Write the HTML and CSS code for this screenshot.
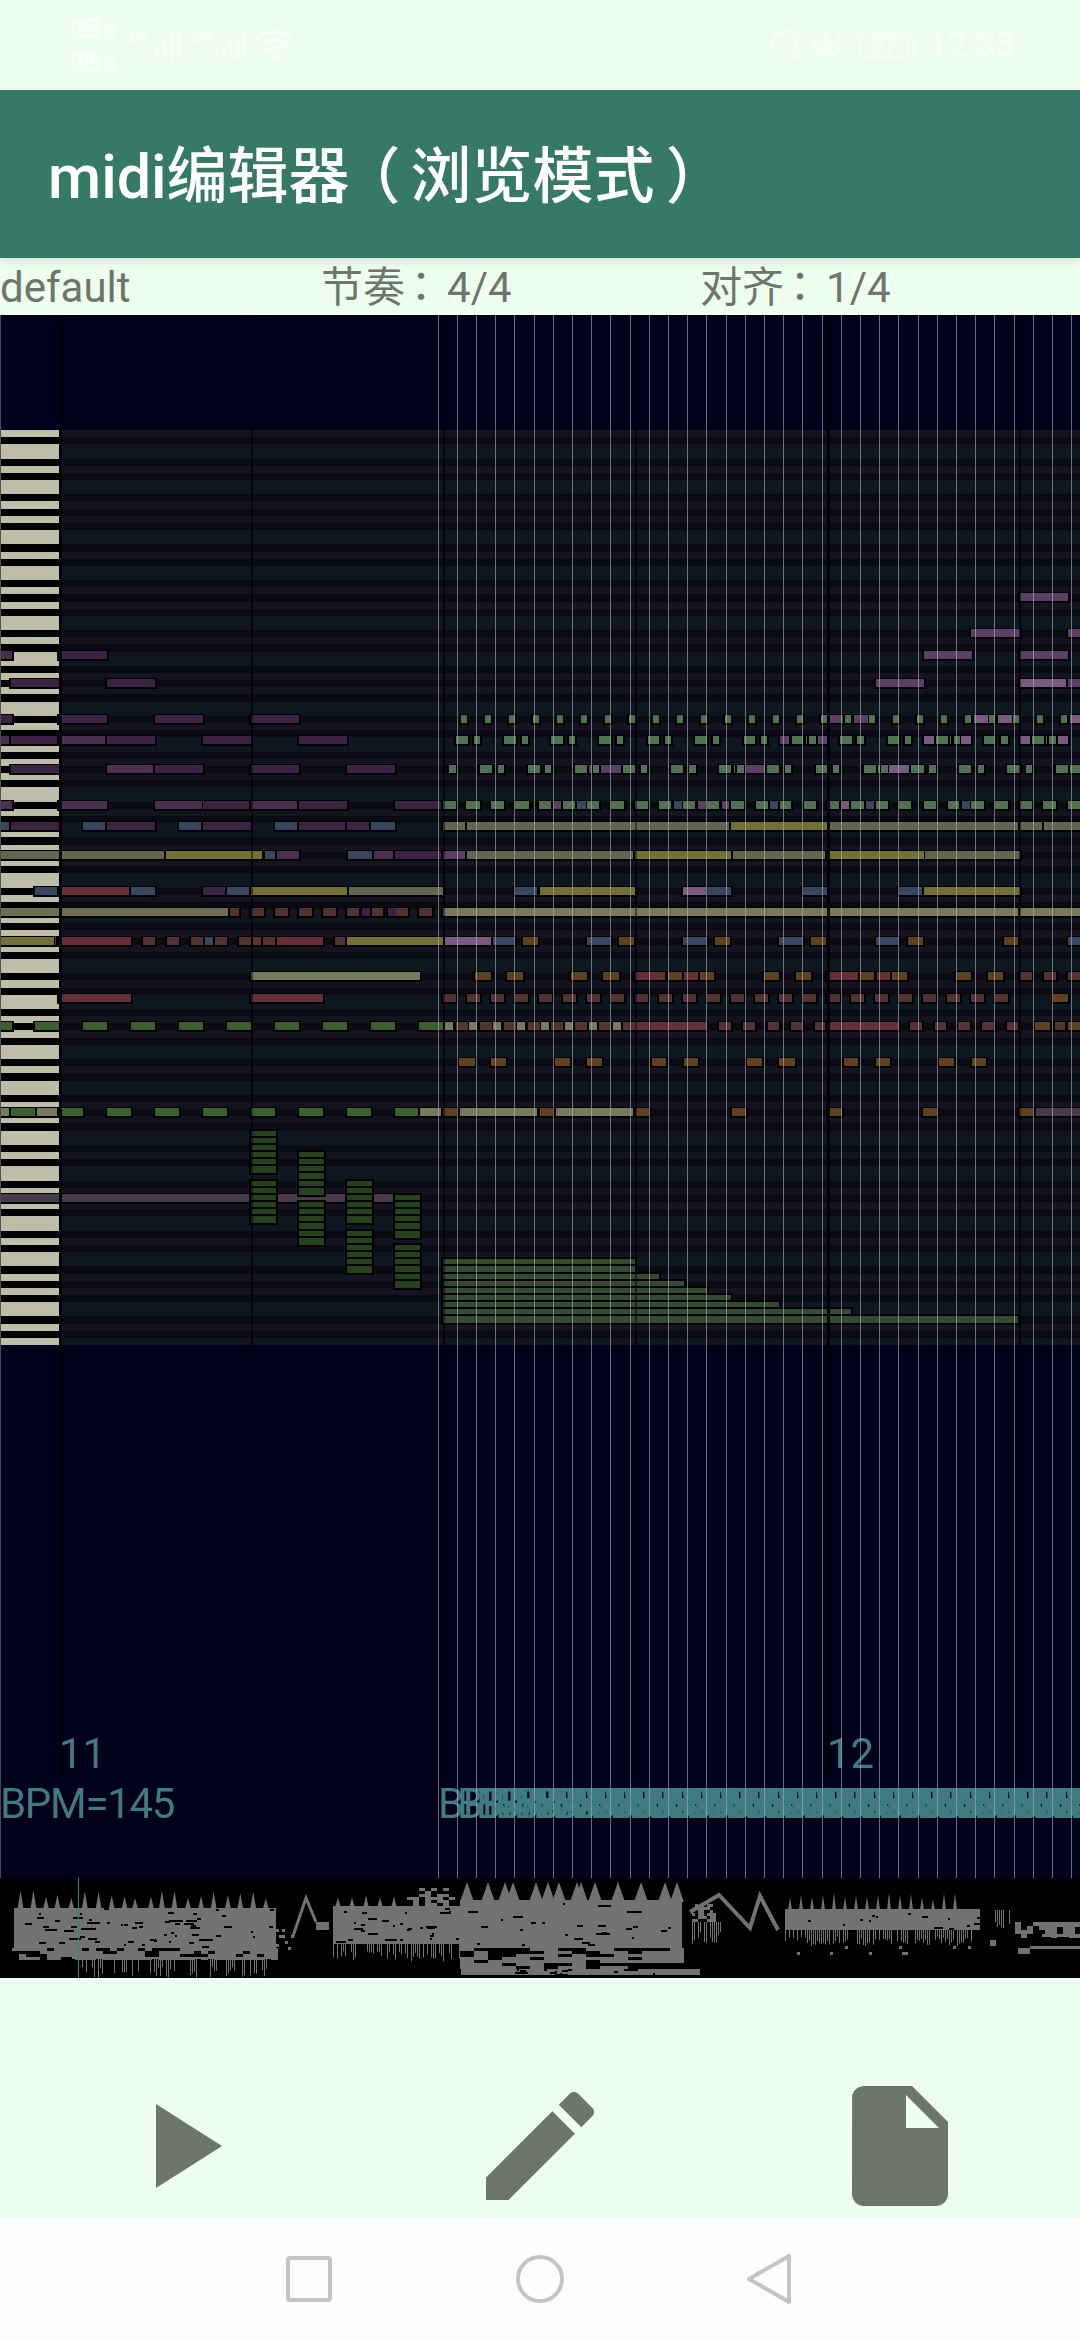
FILE: index.html
```html
<!DOCTYPE html>
<html>
<head>
  <meta charset="utf-8" />
  <title>midi编辑器</title>
  <link rel="stylesheet" href="styles.css">
</head>
<body>
  <div class="status">
    <div class="status-side">
      <div class="sims">
        <div class="sim"><span class="hd">HD</span><span class="slot">1</span></div>
        <div class="sim"><span class="hd">HD</span><span class="slot">2</span></div>
      </div>
      <span class="net">4G</span>
      <svg class="bars" width="34" height="30" viewBox="0 0 34 30"><path d="M0 24h4v6H0zM8 17h4v13H8zM16 11h4v19h-4zM23 5h4v25h-4zM30 0h4v30h-4z"/></svg>
      <span class="net net2">4G</span>
      <svg class="bars" width="32" height="30" viewBox="0 0 34 30"><path d="M0 24h4v6H0zM8 17h4v13H8zM16 11h4v19h-4zM23 5h4v25h-4zM30 0h4v30h-4z"/></svg>
      <svg class="wifi" width="36" height="30" viewBox="0 0 36 30"><path d="M1 8C10 0 26 0 35 8M7 14c6-5 16-5 22 0M12 20c4-3 8-3 12 0" fill="none" stroke-width="3.5"/><path class="solid" d="M15 24h6v6h-6zM25 27l4-3v6zM31 24l4 3-4 3z"/></svg>
    </div>
    <div class="status-side">
      <svg class="head" width="28" height="30" viewBox="0 0 28 30"><path d="M2 20V13a12 12 0 0 1 24 0v11q0 4-6 4h-3" fill="none" stroke-width="3"/><path class="solid" d="M6 15h3v8H6zM19 15h3v8h-3z"/></svg>
      <svg class="eye" width="33" height="28" viewBox="0 0 33 28"><path d="M2 17q14.500-14 29 0q-14.500 14-29 0z" fill="none" stroke-width="3"/><circle class="solid" cx="16.500" cy="17" r="5.500"/><path d="M3 5l4 6M16.500 1v5M30 5l-4 6" fill="none" stroke-width="3"/></svg>
      <div class="battery"><span>87</span></div>
      <span class="cap"></span>
      <span class="clock">12:38</span>
    </div>
  </div>

  <header class="toolbar">midi编辑器<span class="paren paren-open">（</span>浏览模式<span class="paren paren-close">）</span></header>

  <div class="info">
    <span class="info-name">default</span>
    <span class="info-beat">节奏<span class="colon">：</span>4/4</span>
    <span>对齐<span class="colon">：</span>1/4</span>
  </div>

  <div class="roll" id="roll">
    <canvas id="notes" width="1080" height="1563"></canvas>
    <span class="bar-no bar-11">11</span>
    <span class="bar-no bar-12">12</span>
    <span class="bpm bpm-first">BPM=145</span>
    <canvas id="gridlines" width="1080" height="1563"></canvas>
  </div>

  <canvas class="mini" id="mini" width="1080" height="100"></canvas>

  <div class="actions">
    <svg width="144" height="144" viewBox="0 0 24 24"><path d="M8 5v14l11-7z"/></svg>
    <svg width="144" height="144" viewBox="0 0 24 24"><path d="M3 17.250V21h3.750L17.810 9.940l-3.750-3.750L3 17.250zM20.710 7.040c.39-.39.39-1.020 0-1.410l-2.340-2.340c-.39-.39-1.020-.39-1.410 0l-1.830 1.830 3.750 3.750 1.830-1.830z"/></svg>
    <svg width="144" height="144" viewBox="0 0 24 24"><path d="M6 2c-1.100 0-1.990.9-1.990 2L4 20c0 1.100.89 2 1.990 2H18c1.100 0 2-.9 2-2V8l-6-6H6zm7 7V3.500L18.500 9H13z"/></svg>
  </div>

  <nav class="navbar">
    <svg width="50" height="50" viewBox="0 0 50 50"><rect x="4" y="4" width="42" height="42" rx="2"/></svg>
    <svg class="nav-home" width="50" height="50" viewBox="0 0 50 50"><circle cx="25" cy="25" r="22"/></svg>
    <svg class="nav-back" width="50" height="54" viewBox="0 0 50 54"><path d="M46 4v46L6 27z" stroke-linejoin="round"/></svg>
  </nav>

  <script src="roll.js"></script>
</body>
</html>
```

FILE: styles.css
```css
html, body {
  margin: 0;
  padding: 0;
  width: 1080px;
  height: 2340px;
  overflow: hidden;
  background: #eeffef;
  font-family: Roboto, "Noto Sans CJK SC", sans-serif;
}
canvas {
  display: block;
}

/* status bar, nearly white on the mint background */
.status {
  height: 90px;
  box-sizing: border-box;
  padding: 0 65px 0 72px;
  display: flex;
  justify-content: space-between;
  align-items: center;
  color: #f8fff9;
}
.status svg {
  stroke: #f8fff9;
  fill: #f8fff9;
}
.status svg path[fill="none"] {
  fill: none;
}
.status-side {
  display: flex;
  align-items: center;
}
.sims {
  display: flex;
  flex-direction: column;
  gap: 15px;
  margin-right: 11px;
}
.sim {
  display: flex;
  align-items: flex-end;
  gap: 5px;
}
.hd {
  width: 28px;
  height: 19px;
  border-radius: 3px;
  background: #f8fff9;
  color: #eeffef;
  font-size: 17px;
  font-weight: 700;
  line-height: 19px;
  text-align: center;
}
.slot {
  width: 10px;
  height: 13px;
  border-radius: 2px;
  background: #f8fff9;
  color: #eeffef;
  font-size: 11px;
  font-weight: 700;
  line-height: 13px;
  text-align: center;
}
.net {
  font-size: 17px;
  font-weight: 700;
  margin: 0 0 14px 0;
}
.net2 {
  margin-left: 11px;
}
.wifi {
  margin-left: 10px;
}
.bars, .wifi, .head, .eye {
  stroke-width: 0;
}
.wifi path, .head path, .eye path {
  stroke-linecap: round;
}
.solid {
  stroke: none;
}
.bars path {
  stroke: none;
}
.eye {
  margin: 0 16px 0 11px;
}
.battery {
  width: 50px;
  height: 25px;
  box-sizing: border-box;
  border: 2px solid #f8fff9;
  border-radius: 4px;
  font-size: 26px;
  line-height: 21px;
  text-align: center;
}
.cap {
  width: 4px;
  height: 15px;
  margin: 0 12px 0 3px;
  background: #f8fff9;
}
.clock {
  font-size: 35px;
  line-height: 40px;
}

.toolbar {
  height: 168px;
  box-sizing: border-box;
  padding-left: 48px;
  background: #357966;
  color: #fff;
  font-size: 61px;
  font-weight: 500;
  line-height: 174px;
  box-shadow: 0 3px 8px rgba(0, 0, 0, 0.12);
  position: relative;
}
/* the brackets sit in the middle of their cell here */
.paren {
  display: inline-block;
  width: 61px;
  overflow: visible;
}
.paren-open {
  text-indent: -10px;
}
.paren-close {
  text-indent: 11px;
}

.info {
  height: 57px;
  display: grid;
  grid-template-columns: 321px 379px 1fr;
  color: #6e766c;
  font-size: 42px;
  line-height: 60px;
  white-space: nowrap;
}
.colon {
  font-family: "Noto Sans CJK TC", sans-serif;
  line-height: 0;
  margin: 0 5px 0 -5px;
}

.roll {
  position: relative;
  height: 1563px;
  overflow: hidden;
  background: #00001a;
}
#gridlines {
  position: absolute;
  left: 0;
  top: 0;
}
.bar-no, .bpm {
  position: absolute;
  color: #3f7b80;
  font-size: 42px;
  line-height: 42px;
  white-space: nowrap;
}
.bar-no {
  top: 1418px;
}
.bar-11 {
  left: 59px;
}
.bar-12 {
  left: 827px;
}
.bpm {
  top: 1468px;
  letter-spacing: -1.3px;
}
.bpm-first {
  left: 0;
}

.mini {
  height: 100px;
  background: #000;
}

.actions {
  height: 240px;
  box-sizing: border-box;
  padding-top: 96px;
  display: grid;
  grid-template-columns: repeat(3, 1fr);
  justify-items: center;
  align-items: start;
}
.actions svg {
  display: block;
  fill: #6e766c;
}

.navbar {
  height: 122px;
  box-sizing: border-box;
  padding: 36px 0 0 284px;
  display: flex;
  align-items: flex-start;
  background: #fdfdfd;
}
.navbar svg {
  fill: none;
  stroke: #c4c4c4;
  stroke-width: 4;
}
.nav-home {
  margin-left: 181px;
}
.nav-back {
  margin: -2px 0 0 178px;
}
```

FILE: roll.js
```js
'use strict';
// piano roll, drawn like the app draws it: one canvas for keys and notes,
// a second on top of the tempo labels for the thin grid lines

var ROW = 915 / 128;
var TOP = 430 - 315;

var COLORS = {
  p: '#3c2344', P: '#4a2f50', l: '#5c3f66', L: '#7a5a80',
  b: '#38465f', r: '#652f37', o: '#62654f', y: '#737036',
  O: '#767a58', g: '#4f7350', d: '#3b5f31', D: '#25421e',
  h: '#334a31', B: '#5e4220', R: '#533331', v: '#483a4a', q: '#6b6e50'
};

// one line per pitch row: "<color><from>-<to>" in screen pixels
var ROWS = {
  23: 'l1020-1068',
  28: 'l971-1020 l1068-1080',
  31: 'P1-12 p59-107 l924-972 l1020-1068',
  35: 'p11-59 p107-155 l876-924 L1020-1066 l1068-1080',
  40: 'p1-12 p59-107 p155-203 p251-299',
  43: 'P1-9 p11-57 P59-105 p107-155 p203-251 p299-347 g456-468 g474-480 g504-516 g522-528 g551-563 g569-575 g599-611 g617-623 g648-659 g665-671 g695-707 g713-719 g744-755 g761-767 l780-789 g792-803 g806-807 g809-816 l818-827 g840-852 g857-864 g888-899 g905-911 L924-934 g936-948 g950-951 g954-960 L961-971 g984-995 g1001-1008 L1020-1030 g1032-1044 g1046-1047 g1049-1056 L1058-1068',
  47: 'p11-59 P107-153 p155-203 p251-299 p347-395 g449-456 g480-492 g498-504 g528-540 g545-551 g575-587 l589-592 g593-599 l601-621 g623-635 g641-647 g671-683 g689-696 g719-731 g734-735 g737-744 l746-765 g767-779 g785-791 g816-827 g833-839 g864-876 g878-880 g881-888 L889-909 g911-924 g929-936 g959-971 g978-984 g1007-1020 g1026-1032 g1056-1068 g1070-1080',
  52: 'P1-12 P59-107 P155-202 p203-249 P251-297 p299-347 p395-441 g443-456 g466-480 g491-504 g515-529 g539-551 l553-561 g563-575 b577-586 g587-599 g611-624 g635-648 g659-671 b674-682 g683-695 l698-706 g707-719 l722-729 g731-744 g756-768 b770-778 g780-791 g804-816 g827-839 L842-849 g851-864 b866-874 g876-888 g899-911 g924-936 g948-959 b962-970 g971-984 g995-1008 g1020-1032 g1043-1056 g1068-1080',
  55: 'b1-9 p11-59 b83-105 p107-155 b179-201 p203-251 b275-297 p299-345 p347-369 b371-395 o443-465 o467-729 y731-827 o829-1018 o1020-1042 o1044-1080',
  59: 'o1-164 y166-262 b265-275 P277-299 b348-372 P374-393 p395-441 l443-465 o467-633 y635-731 o733-825 y827-924 o925-1020',
  64: 'b35-57 r59-129 b131-155 p203-225 b227-249 y251-347 o349-443 b515-537 y540-635 L683-706 b707-731 b803-827 b899-922 y924-1020',
  67: 'q1-228 R230-239 R251-264 R275-288 R299-312 R323-336 R347-359 p362-370 R372-383 p388-396 R396-408 R419-432 O443-1018 O1020-1080',
  71: 'y1-54 r55-56 r59-131 R143-155 R167-179 R191-203 b205-213 R215-227 R239-251 r253-261 R263-275 r277-323 R335-345 y347-443 L445-491 b493-515 B523-538 b587-611 B619-634 b683-707 B715-730 b779-803 B811-826 b876-899 B908-923 B1004-1018 b1068-1080',
  76: 'O251-420 B475-491 B507-523 B571-587 B603-619 r635-665 B668-682 r684-698 B700-714 B764-779 B796-811 r827-858 B860-874 r877-890 B892-907 B956-971 B988-1003 R1020-1032 R1044-1056 R1068-1080',
  79: 'r59-131 r251-323 B1053-1068',
  83: 'd1-12 r635-707 r827-899 R719-731 R743-755 R768-779 R791-803 R815-825 R910-922 R935-946 R958-970 R982-994 R1007-1018 B1035-1050 R1055-1065 B1068-1080',
  88: 'B459-475 B491-506 B555-570 B587-602 B652-666 B684-698 B747-762 B779-795 B844-858 B876-890 B939-954 B972-986',
  95: 'O1-9 d11-35 O37-57 d59-83 d107-131 d155-179 d203-227 d251-275 d299-323 d347-371 d395-418 O420-441 B443-457 O460-537 B540-553 O556-633 B636-649 B732-746 B828-842 B923-937 B1019-1033 v1036-1080',
  107: 'v1-251 v277-347 v373-420'
};

// notes that repeat on a fixed step
function every(row, color, start, width, step, count) {
  for (var i = 0; i < count; i++) {
    var x = start + i * step;
    ROWS[row] += ' ' + color + x + '-' + (x + width);
  }
}
ROWS[40] += ' l829-843 l854-868 L974-988 L998-1012 L1070-1080';
every(40, 'g', 461, 6, 24, 15);
every(40, 'g', 821, 6, 24, 11);
every(79, 'R', 443, 12.5, 24, 24);
every(83, 'd', 35, 24, 48, 9);
for (var i = 0; i < 4; i++) {
  ROWS[83] += ' O' + (445 + 24 * i) + '-' + (453 + 24 * i);
  ROWS[83] += ' R' + (456 + 24 * i) + '-' + (468 + 24 * i);
}
ROWS[83] += ' d419-443';
for (i = 0; i < 4; i++) {
  ROWS[83] += ' O' + (541 + 24 * i) + '-' + (549 + 24 * i);
  ROWS[83] += ' R' + (551 + 24 * i) + '-' + (563 + 24 * i);
}

// stacked drum hits and the long decaying chord, drawn last, row by row
var STACKS = [
  [251, 276, [98, 99, 100, 101, 102, 103, 105, 106, 107, 108, 109, 110]],
  [299, 324, [101, 102, 103, 104, 105, 106, 108, 109, 110, 111, 112, 113]],
  [347, 372, [105, 106, 107, 108, 109, 110, 112, 113, 114, 115, 116, 117]],
  [395, 420, [107, 108, 109, 110, 111, 112, 114, 115, 116, 117, 118, 119]]
];
var DECAY = [[116, 635], [117, 635], [118, 659], [119, 684], [120, 707], [121, 731], [122, 779], [123, 851], [124, 1018]];

function rowY(r) {
  return TOP + r * ROW;
}

function drawKeys(c) {
  var black = [1, 4, 6, 9, 11];
  for (var r = 0; r < 128; r++) {
    var y = Math.round(rowY(r));
    var h = Math.round(rowY(r + 1)) - y;
    var n = r % 12;
    var isBlack = black.indexOf(n) >= 0;
    c.fillStyle = isBlack ? '#0a0a13' : (n == 2 || n == 3 || n == 7 || n == 8 ? '#0e1620' : '#13141f');
    c.fillRect(0, y, 1080, h);
    c.fillStyle = isBlack ? '#000' : '#bdbda8';
    c.fillRect(1, y, 58, h);
  }
}

// stacked notes leave 5px of colour and 2px of black per row
function drawNote(c, r, x0, x1, color) {
  var y = Math.round(rowY(r));
  c.fillStyle = '#000';
  c.fillRect(Math.round(x0) - 2, y - 2, Math.round(x1) - Math.round(x0) + 4, 11);
  c.fillStyle = color;
  c.fillRect(Math.round(x0), y, Math.round(x1) - Math.round(x0), 7);
}

function drawRows(c) {
  Object.keys(ROWS).forEach(function(r) {
    var parts = ROWS[r].trim().split(/\s+/).map(function(s) {
      var m = /^(\w)([\d.]+)-([\d.]+)$/.exec(s);
      return [+m[2], +m[3], COLORS[m[1]]];
    });
    var y = Math.round(rowY(+r));
    c.fillStyle = '#000';
    parts.forEach(function(p) {
      c.fillRect(Math.round(p[0]) - 2, y - 2, Math.round(p[1]) - Math.round(p[0]) + 4, 11);
    });
    parts.forEach(function(p) {
      c.fillStyle = p[2];
      c.fillRect(Math.round(p[0]), y - 1, Math.round(p[1]) - Math.round(p[0]), 8);
    });
  });
  STACKS.forEach(function(s) {
    s[2].forEach(function(r) { drawNote(c, r, s[0], s[1], COLORS.D); });
  });
  DECAY.forEach(function(d) { drawNote(c, d[0], 443, d[1], COLORS.h); });
}

function drawBeats(c) {
  [[60, 3], [252, 2], [444, 2], [636, 2], [828, 3], [1020, 2]].forEach(function(b) {
    c.fillStyle = b[1] == 3 ? 'rgba(0,0,8,0.9)' : 'rgba(0,0,12,0.5)';
    c.fillRect(b[0] - 1, 0, b[1], 1462);
  });
}

function drawLines() {
  var c = document.getElementById('gridlines').getContext('2d');
  c.fillStyle = 'rgba(170,172,180,0.62)';
  for (var n = 0; n < 34; n++)
    c.fillRect(438 + Math.floor(n * 19.2), 0, 1, 1563);
  c.fillStyle = 'rgba(120,125,140,0.6)';
  c.fillRect(0, 0, 1, 1563);
}

function addTempoLabels() {
  var roll = document.getElementById('roll');
  var lines = document.getElementById('gridlines');
  for (var n = 0; n < 34; n++) {
    var s = document.createElement('span');
    s.className = 'bpm';
    s.textContent = 'BPM=145';
    s.style.left = (438 + Math.floor(n * 19.2)) + 'px';
    roll.insertBefore(s, lines);
  }
}

// overview of the whole song: blocks of grey, seeded so that it stays the same
var seed = 12345;
function rnd() {
  seed = (seed * 1103515245 + 12345) & 0x7fffffff;
  return seed / 0x7fffffff;
}

function drawMini() {
  var c = document.getElementById('mini').getContext('2d');
  var GREY = '#70736f';
  c.fillStyle = '#000';
  c.fillRect(0, 0, 1080, 100);
  c.fillStyle = GREY;

  function scatter(x0, x1, y0, y1, density, w, h) {
    for (var x = x0; x < x1; x += w)
      for (var y = y0; y < y1; y += h)
        if (rnd() < density) c.fillRect(x, y, w, h);
  }
  // short black dashes, the gaps between notes
  function holes(x0, x1, y0, y1, count) {
    c.fillStyle = '#000';
    for (var i = 0; i < count; i++) {
      var x = x0 + rnd() * (x1 - x0);
      var y = y0 + rnd() * (y1 - y0);
      c.fillRect(Math.round(x), Math.round(y), 2 + Math.round(rnd() * rnd() * 14), 2);
    }
    c.fillStyle = GREY;
  }
  function spike(x, top, bottom, half) {
    c.beginPath();
    c.moveTo(x, top);
    c.lineTo(x + half, bottom);
    c.lineTo(x - half, bottom);
    c.fill();
  }
  function thin(x0, x1, y0, y1, density) {
    for (var x = x0; x < x1; x += 2)
      if (rnd() < density) c.fillRect(x, y0, 1, (y1 - y0) * (0.4 + rnd() * 0.6));
  }

  // first section
  c.fillRect(14, 30, 262, 40);
  holes(14, 276, 30, 68, 60);
  scatter(12, 276, 70, 80, 0.72, 7, 3);
  c.fillRect(72, 79, 204, 2);
  thin(78, 275, 81, 100, 0.42);
  for (var x = 18; x < 276; x += 13)
    spike(x + rnd() * 3, 11 + rnd() * 10, 31, 3);
  scatter(276, 293, 45, 72, 0.22, 3, 3);

  // lone peak
  c.lineWidth = 3;
  c.strokeStyle = GREY;
  c.beginPath();
  c.moveTo(293, 58);
  c.lineTo(306, 20);
  c.lineTo(316, 44);
  c.stroke();
  c.fillRect(316, 44, 13, 8);

  // second section
  c.fillRect(333, 28, 127, 38);
  holes(333, 460, 30, 64, 30);
  thin(333, 460, 66, 84, 0.6);
  scatter(407, 450, 10, 27, 0.4, 6, 3);
  for (x = 338; x < 400; x += 14)
    spike(x, 14 + rnd() * 6, 28, 2.5);

  // loud section
  c.fillRect(460, 22, 222, 48);
  holes(460, 680, 24, 68, 26);
  scatter(460, 682, 70, 90, 0.55, 14, 3);
  c.fillRect(461, 91, 239, 6);
  holes(500, 690, 91, 97, 18);
  [467, 488, 505, 513, 536, 548, 559, 577, 581, 595, 618, 641, 665, 677].forEach(function(px) {
    spike(px, 4, 24, 7);
  });

  // middle triangles
  thin(692, 722, 44, 68, 0.75);
  c.beginPath();
  c.moveTo(690, 34);
  c.lineTo(719, 17);
  c.lineTo(750, 50);
  c.lineTo(760, 18);
  c.lineTo(778, 52);
  c.lineWidth = 4;
  c.stroke();
  scatter(692, 716, 26, 44, 0.6, 3, 3);

  // last section
  c.fillRect(785, 31, 195, 21);
  holes(785, 980, 32, 50, 14);
  for (x = 790; x < 960; x += 11)
    spike(x, 14 + rnd() * 8, 32, 2);
  thin(785, 975, 52, 68, 0.75);
  scatter(785, 980, 68, 78, 0.03, 3, 3);
  thin(985, 1010, 32, 56, 0.4);
  c.fillRect(990, 62, 6, 6);
  scatter(1015, 1080, 44, 60, 0.7, 6, 4);
  c.fillRect(1042, 46, 38, 3);
  c.fillRect(1042, 56, 38, 3);
  c.fillRect(1018, 70, 12, 6);
  c.fillRect(1030, 68, 50, 3);

  // playhead
  c.fillStyle = '#3f7b80';
  c.fillRect(78, 0, 1, 100);
}

var ctx = document.getElementById('notes').getContext('2d');
ctx.fillStyle = '#00001a';
ctx.fillRect(0, 0, 1080, 1563);
drawBeats(ctx);
drawKeys(ctx);
drawBeats(ctx);
drawRows(ctx);
drawBeats(ctx);
drawLines();
addTempoLabels();
drawMini();
```
